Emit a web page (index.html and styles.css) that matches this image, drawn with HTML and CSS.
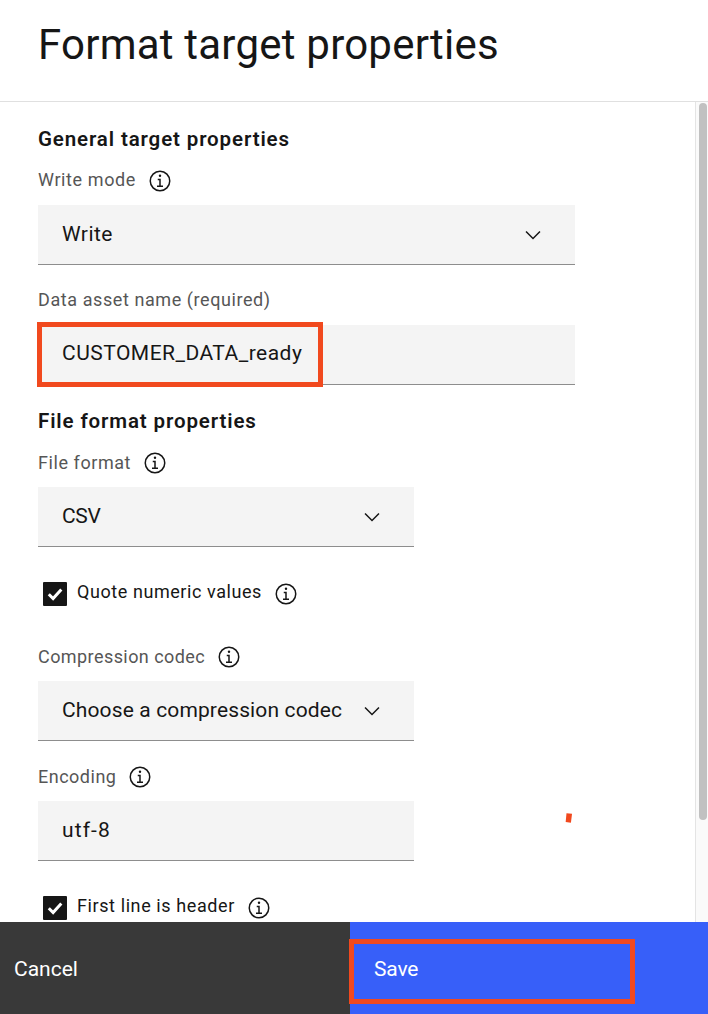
FILE: index.html
```
<!DOCTYPE html>
<html lang="en">
<head>
<meta charset="utf-8">
<title>Format target properties</title>
<link rel="stylesheet" href="styles.css">
</head>
<body>
<svg class="defs" aria-hidden="true">
  <symbol id="info" viewBox="0 0 32 32"><path d="M17 22V13h-4v2h2v7h-3v2h8v-2z"/><circle cx="16" cy="9" r="1.6"/><path d="M16 30A14 14 0 1 1 30 16 14 14 0 0 1 16 30Zm0-26A12 12 0 1 0 28 16 12 12 0 0 0 16 4Z"/></symbol>
  <symbol id="chevron" viewBox="0 0 16 16"><path d="M8 11 3 6l.7-.7L8 9.6l4.3-4.3.7.7z"/></symbol>
  <symbol id="check" viewBox="0 0 24 24"><path d="m5.8 12.2 4.3 4.3 8.2-9" fill="none" stroke="#fff" stroke-width="3"/></symbol>
</svg>
<div class="panel">
  <header class="header"><h1 class="title">Format target properties</h1></header>
  <div class="body">
    <main class="form">
      <h2 class="section">General target properties</h2>
      <div class="label"><span class="t-write">Write mode</span><svg class="icon"><use href="#info"/></svg></div>
      <div class="field wide"><span class="v-write">Write</span><svg class="icon"><use href="#chevron"/></svg></div>
      <div class="label next"><span class="t-asset">Data asset name (required)</span></div>
      <div class="field wide"><span class="v-asset">CUSTOMER_DATA_ready</span><i class="mark mark-name"></i></div>
      <h2 class="section file">File format properties</h2>
      <div class="label low"><span class="t-format">File format</span><svg class="icon"><use href="#info"/></svg></div>
      <div class="field"><span class="v-csv">CSV</span><svg class="icon"><use href="#chevron"/></svg></div>
      <div class="option"><svg class="box"><use href="#check"/></svg><span class="t-quote">Quote numeric values</span><svg class="icon"><use href="#info"/></svg></div>
      <div class="label low codec"><span class="t-codec">Compression codec</span><svg class="icon"><use href="#info"/></svg></div>
      <div class="field"><span class="v-codec">Choose a compression codec</span><svg class="icon"><use href="#chevron"/></svg></div>
      <div class="label low next"><span class="t-encoding">Encoding</span><svg class="icon"><use href="#info"/></svg></div>
      <div class="field"><span class="v-utf">utf-8</span></div>
      <div class="option"><svg class="box"><use href="#check"/></svg><span class="t-first">First line is header</span><svg class="icon"><use href="#info"/></svg></div>
    </main>
    <div class="scrollbar"><div class="thumb"></div></div>
    <svg class="speck" viewBox="0 0 8 12"><path d="M1.5 1.2 7 1.8 5.9 10.8.7 10.1z" fill="#f1491e"/></svg>
  </div>
  <footer class="footer">
    <button class="button cancel">Cancel</button>
    <button class="button save">Save<i class="mark mark-save"></i></button>
  </footer>
</div>
</body>
</html>
```
FILE: styles.css
```
* { box-sizing: border-box; }
body { margin: 0; background: #fff; color: #161616; font-family: Roboto, "Liberation Sans", sans-serif; }
.defs { display: none; }
.panel { display: flex; flex-direction: column; width: 708px; height: 1014px; overflow: hidden; }
.header { height: 102px; flex: none; padding: 17px 38px 0; border-bottom: 1px solid #e0e0e0; }
.title { margin: 0; font-size: 42px; line-height: 56px; font-weight: 400; letter-spacing: 0.22px; white-space: nowrap; }
.body { position: relative; display: flex; height: 820px; flex: none; overflow: hidden; }
.form { flex: 1; padding: 23px 0 0 38px; }
.section { margin: 0 0 16px; font-size: 20.5px; line-height: 28px; font-weight: 600; letter-spacing: 0.87px; white-space: nowrap; }
.section.file { margin-top: 22px; }
.label, .option { display: flex; align-items: center; gap: 12px; height: 24px; font-size: 18px; line-height: 24px; letter-spacing: 0.5px; white-space: nowrap; }
.label { margin-bottom: 12px; color: #565656; }
.label span { margin-top: -2px; }
.label.low span { margin-top: 0; }
.label.next { margin-top: 24px; }
.label.codec { margin-top: 39px; }
.icon { width: 24px; height: 24px; flex: none; fill: #161616; }
.field { position: relative; display: flex; align-items: center; justify-content: space-between; width: 376px; height: 60px; padding: 0 30px 0 24px; background: #f4f4f4; border-bottom: 1px solid #8d8d8d; font-size: 21px; line-height: 28px; white-space: nowrap; }
.field span { margin-top: -2px; }
.field.wide { width: 537px; }
.option { margin-top: 35px; padding-left: 5px; }
.option span { margin: -4px 0 0 -2px; }
.t-write { letter-spacing: 0.6px; }
.t-asset { letter-spacing: 0.58px; }
.t-format { letter-spacing: 0.57px; }
.t-quote { letter-spacing: 0.57px; }
.t-codec { letter-spacing: 0.43px; }
.t-first { letter-spacing: 0.6px; }
.v-write { letter-spacing: 0.45px; }
.field .v-asset { margin-top: -4px; letter-spacing: 0.48px; }
.v-csv { letter-spacing: -0.3px; }
.v-codec { letter-spacing: 0.13px; }
.v-utf { letter-spacing: 1.1px; }
.box { width: 24px; height: 24px; flex: none; background: #161616; border-radius: 1px; }
.mark { position: absolute; border: 5px solid #f1491e; width: 286px; height: 65px; }
.mark-name { left: -1px; top: -3px; }
.mark-save { left: -1px; top: 17px; }
.scrollbar { width: 13px; padding: 1px 1px 0 3px; background: #fafafa; border-left: 1px solid #e4e4e4; }
.thumb { height: 717px; border-radius: 4px; background: #c1c1c1; }
.speck { position: absolute; left: 565px; top: 710px; width: 8px; height: 12px; }
.footer { display: flex; height: 92px; flex: none; }
.button { position: relative; border: 0; padding: 2px 0 0 24px; color: #fff; font: 21px/28px Roboto, "Liberation Sans", sans-serif; text-align: left; }
.cancel { width: 350px; padding-left: 14px; background: #393939; }
.save { flex: 1; background: #375ff9; letter-spacing: -0.15px; }
```
